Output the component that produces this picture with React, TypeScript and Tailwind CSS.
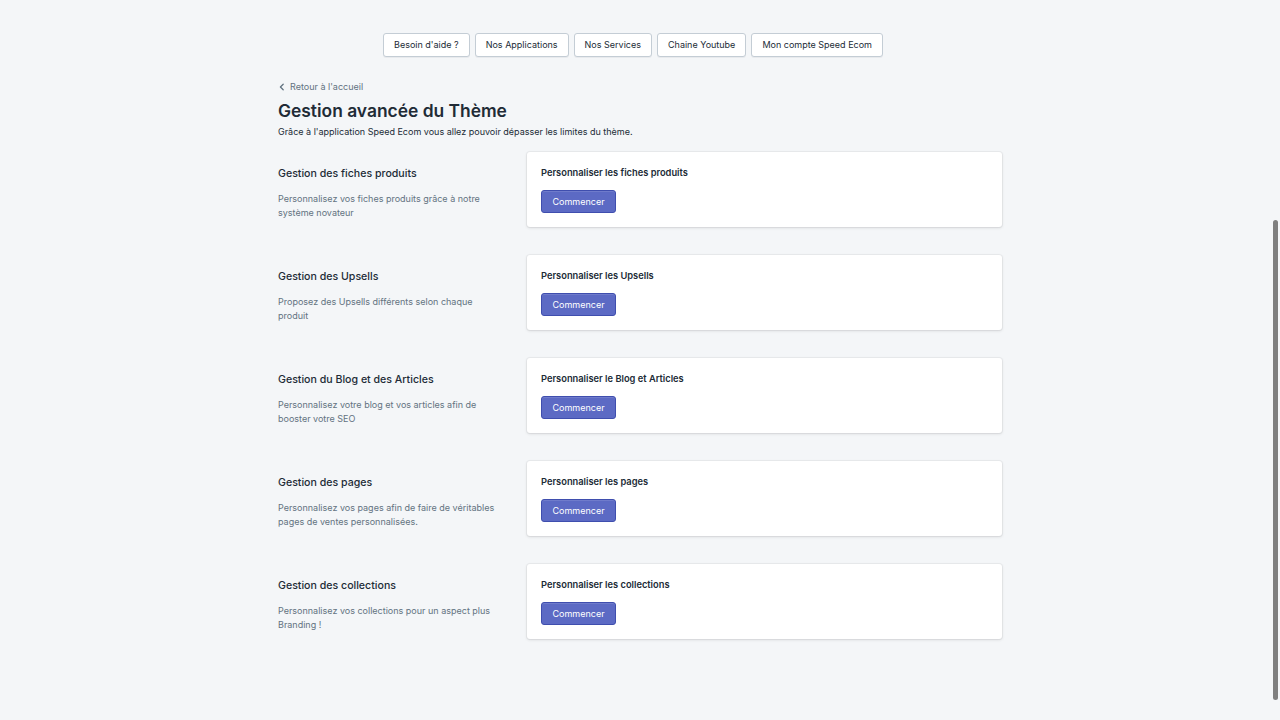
import React from 'react';

const topLinks = [
  "Besoin d'aide ?",
  'Nos Applications',
  'Nos Services',
  'Chaine Youtube',
  'Mon compte Speed Ecom',
];

const sections = [
  {
    title: 'Gestion des fiches produits',
    desc: 'Personnalisez vos fiches produits grâce à notre système novateur',
    card: 'Personnaliser les fiches produits',
  },
  {
    title: 'Gestion des Upsells',
    desc: 'Proposez des Upsells différents selon chaque produit',
    card: 'Personnaliser les Upsells',
  },
  {
    title: 'Gestion du Blog et des Articles',
    desc: 'Personnalisez votre blog et vos articles afin de booster votre SEO',
    card: 'Personnaliser le Blog et Articles',
  },
  {
    title: 'Gestion des pages',
    desc: 'Personnalisez vos pages afin de faire de véritables pages de ventes personnalisées.',
    card: 'Personnaliser les pages',
  },
  {
    title: 'Gestion des collections',
    desc: 'Personnalisez vos collections pour un aspect plus Branding !',
    card: 'Personnaliser les collections',
  },
];

export default function App() {
  return (
    <div className="min-h-[720px] bg-[#f4f6f8] text-[#212b36] font-['Inter','Liberation_Sans',sans-serif] antialiased">
      {/* Top navigation buttons */}
      <div className="flex justify-center gap-[5px] pt-[33px] pr-[14px]">
        {topLinks.map((label) => (
          <button
            key={label}
            className="h-[24px] px-[10px] rounded-[3px] border border-[#c4cdd5] bg-white text-[9px] text-[#212b36] shadow-[0_1px_0_rgba(22,29,37,0.05)]"
          >
            {label}
          </button>
        ))}
      </div>

      <div className="w-[724px] mx-auto pt-[22px] pb-[80px]">
        {/* Breadcrumb */}
        <a className="flex items-center gap-[4px] text-[9px] text-[#637381] h-[16px]">
          <svg width="8" height="8" viewBox="0 0 10 10" fill="none">
            <path d="M6.5 1.5 3 5l3.5 3.5" stroke="#637381" strokeWidth="1.6" strokeLinecap="round" strokeLinejoin="round" />
          </svg>
          Retour à l'accueil
        </a>

        <h1 className="mt-[4px] text-[17.4px] leading-[24px] font-semibold text-[#212b36]">
          Gestion avancée du Thème
        </h1>
        <p className="mt-[2px] text-[9px] leading-[14px] text-[#212b36]">
          Grâce à l'application Speed Ecom vous allez pouvoir dépasser les limites du thème.
        </p>

        <div className="mt-[13px] flex flex-col gap-[28px]">
          {sections.map((s) => (
            <div key={s.title} className="flex gap-[18px]">
              <div className="w-[231px] shrink-0 pt-[14px] pr-[5px]">
                <h2 className="text-[10.6px] leading-[16px] font-medium text-[#212b36]">{s.title}</h2>
                <p className="mt-[10px] text-[9px] leading-[14px] text-[#637381]">{s.desc}</p>
              </div>
              <div className="flex-1 h-[75px] bg-white rounded-[3px] shadow-[0_0_0_1px_rgba(63,63,68,0.05),0_1px_3px_0_rgba(63,63,68,0.15)] px-[14px] pt-[14px]">
                <h3 className="text-[9.3px] leading-[14px] font-semibold text-[#212b36]">{s.card}</h3>
                <button className="mt-[10px] h-[23px] w-[75px] rounded-[3px] border border-[#3f4eae] bg-[#5c6ac4] text-white text-[9px] shadow-[inset_0_1px_0_0_#6f7bcb]">
                  Commencer
                </button>
              </div>
            </div>
          ))}
        </div>
      </div>

      {/* overlay scrollbar thumb */}
      <div className="fixed right-[2px] top-[220px] w-[5px] h-[480px] rounded-full bg-[#7f7f7f]" />
    </div>
  );
}
